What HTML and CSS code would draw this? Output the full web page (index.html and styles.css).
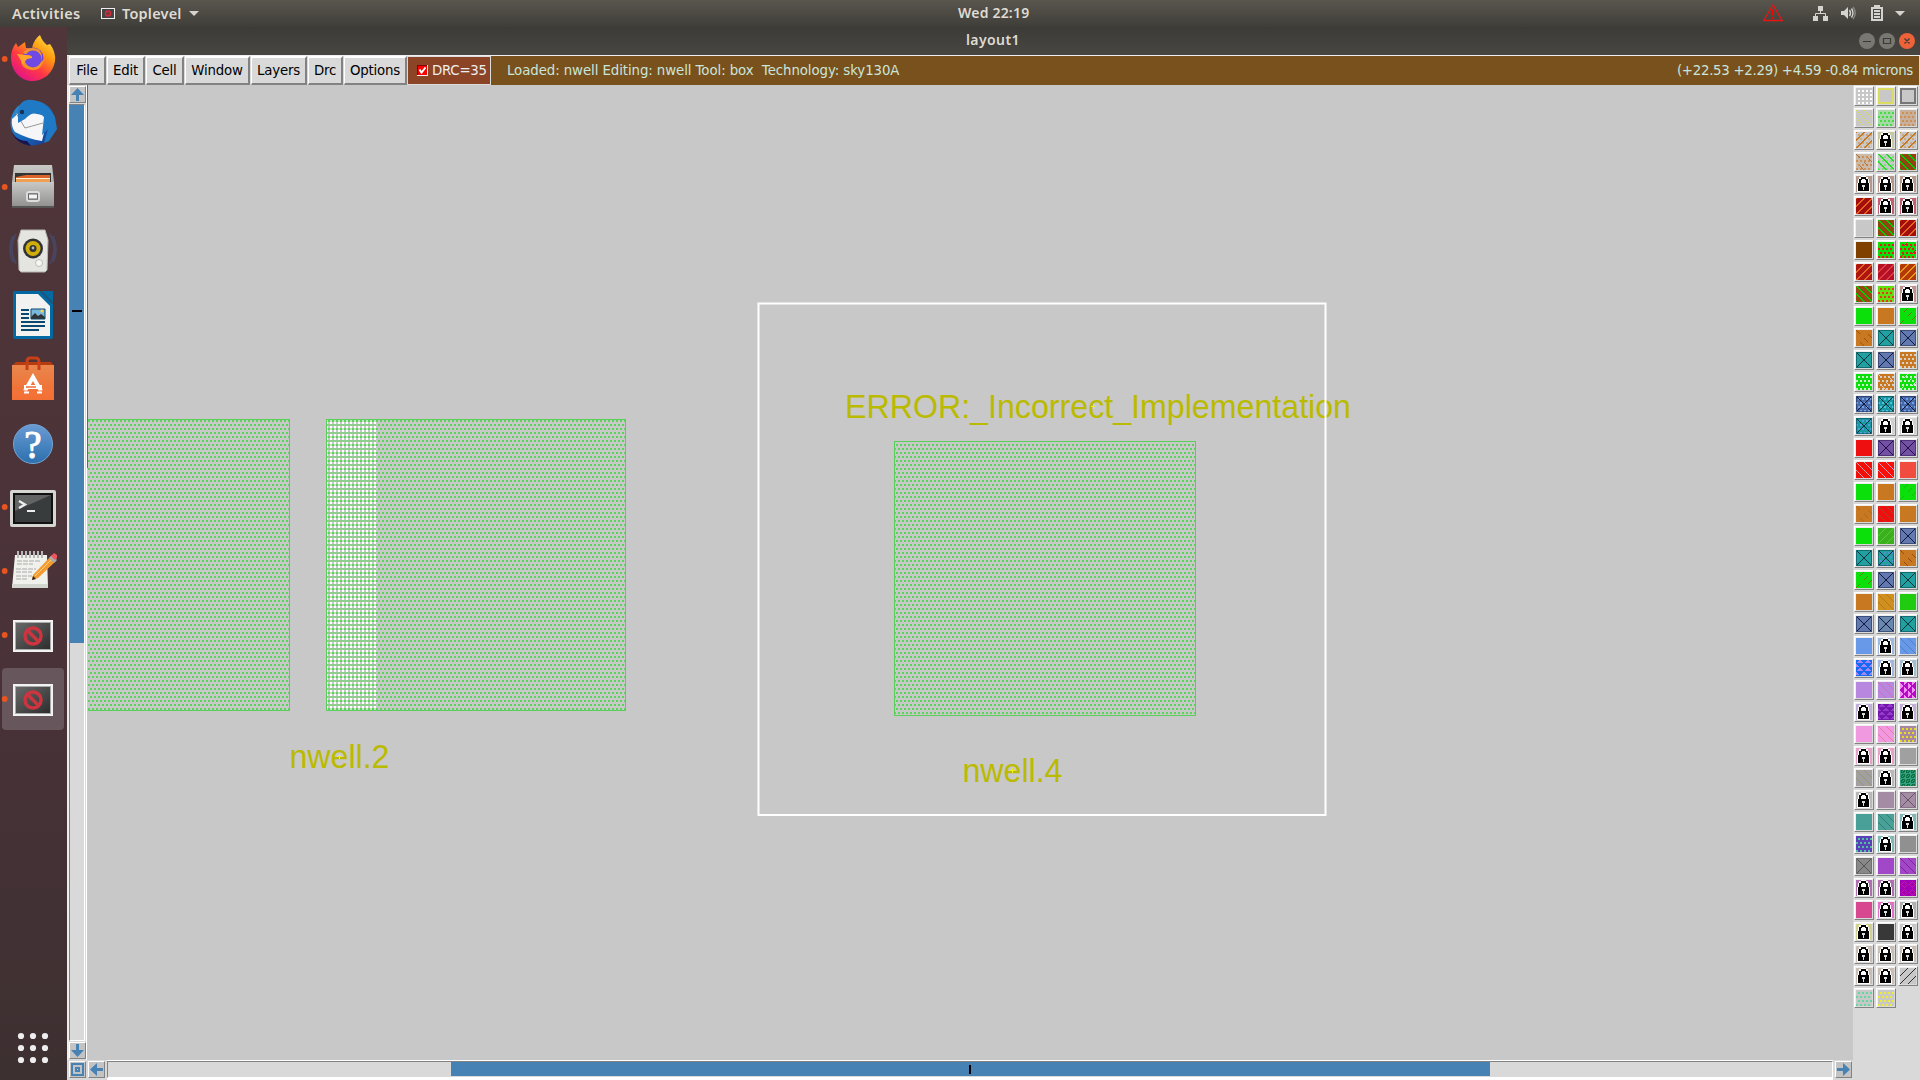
FILE: index.html
```html
<!DOCTYPE html>
<html lang="en">
<head>
<meta charset="utf-8">
<title>layout1</title>
<link rel="stylesheet" href="styles.css">
</head>
<body>
<header class="topbar">
  <span class="activities">Activities</span>
  <svg class="appicon" width="14" height="11" viewBox="0 0 14 11"><rect x=".5" y=".5" width="13" height="10" fill="#444" stroke="#eee"/><circle cx="7" cy="5.5" r="2.5" fill="none" stroke="#d22a36" stroke-width="1.5"/><path d="M5.500 4l3 3" stroke="#d22a36"/></svg>
  <span class="appname">Toplevel</span>
  <svg class="caret" width="10" height="5"><path d="M0 0h10l-5 5z" fill="#d5d3cf"/></svg>
  <span class="clock">Wed 22:19</span>
  <svg class="tray" width="160" height="27" viewBox="1760 0 160 27">
    <path d="M1773 5l9.200 15.500h-18.500z" fill="none" stroke="#e81515" stroke-width="1.300"/><path d="M1773 9.500v6M1773 17v2" stroke="#f00" stroke-width="2"/>
    <g fill="#d5d3cf"><path d="M1818 6h5v5h-5zM1813 16h5v5h-5zM1823 16h5v5h-5z"/><path d="M1820.500 11v2.500M1815.500 16v-2.500h10v2.500" fill="none" stroke="#d5d3cf"/>
    <path d="M1841 11h3l4-4v12l-4-4h-3z"/><path d="M1849.500 10q2 3 0 6M1851.500 8.500q3 4.500 0 9" fill="none" stroke="#d5d3cf" stroke-width="1.400"/><path d="M1853 7q4.500 6 0 12" fill="none" stroke="#858480" stroke-width="1.400"/>
    <path d="M1874 5h6v2h3v14h-12V7h3z"/><path d="M1873 9h8v10h-8z" fill="#4c4a44"/><path d="M1874 10h6v2h-6zM1874 13h6v2h-6zM1874 16h6v2h-6z"/><path d="M1895 11h10l-5 5z"/></g>
  </svg>
</header>
<div class="desktop">
<nav class="dock">
<svg width="67" height="1053" viewBox="0 27 67 1053">
  <defs>
    <linearGradient id="fx" x1="1" y1="0" x2=".3" y2="1"><stop offset="0" stop-color="#fff44f"/><stop offset=".4" stop-color="#ff980e"/><stop offset=".7" stop-color="#ff3647"/><stop offset="1" stop-color="#e31587"/></linearGradient>
    <linearGradient id="tb" x1="0" y1="0" x2="1" y2="1"><stop offset="0" stop-color="#2f94d8"/><stop offset=".6" stop-color="#1764b8"/><stop offset="1" stop-color="#1b2b80"/></linearGradient>
    <linearGradient id="gray" x2="0" y2="1"><stop offset="0" stop-color="#c8c8c6"/><stop offset="1" stop-color="#929290"/></linearGradient>
    <linearGradient id="bag" x2="0" y2="1"><stop offset="0" stop-color="#e9874e"/><stop offset="1" stop-color="#f26a2c"/></linearGradient>
    <linearGradient id="help" x2="0" y2="1"><stop offset="0" stop-color="#6a9bd4"/><stop offset="1" stop-color="#2b70ad"/></linearGradient>
    <linearGradient id="scr" x2="1" y2="1"><stop offset="0" stop-color="#686868"/><stop offset="1" stop-color="#2e2e2e"/></linearGradient>
    <g id="noapp"><rect x="13" y="-16" width="40" height="32" fill="#f2f2f2"/><rect x="15" y="-14" width="36" height="28" fill="#aaa"/><rect x="16" y="-13" width="34" height="26" fill="url(#scr)"/><g fill="none" stroke="#cc3540" stroke-width="3.500"><circle cx="33" cy="0" r="8"/><path d="M27.500-5.500l11 11"/></g></g>
  </defs>
  <rect x="2" y="668" width="62" height="62" rx="4" fill="#67565b"/>
  <g fill="#e95420"><circle cx="4.700" cy="59" r="2.900"/><circle cx="4.700" cy="187" r="2.900"/><circle cx="4.700" cy="507" r="2.900"/><circle cx="4.700" cy="571" r="2.900"/><circle cx="4.700" cy="635" r="2.900"/><circle cx="4.700" cy="699" r="2.900"/></g>
  <path d="M11 58q0-9 5-15l2 4 7-5 1 6 6 0Q34 39 40 35q2 6 7 10l3-1q6 8 5 17c-2 13-12 20-23 20S11 71 11 58z" fill="url(#fx)"/>
  <circle cx="33" cy="58" r="10.500" fill="#6d43dc"/><path d="M23 53q5-7 15-4 6 4 3 13 6-4 5-12-2 22-15 20-10-2-10-9 5 2 9-1l3-4q-5 0-10-3z" fill="#ff9b1b" opacity=".9"/><circle cx="33" cy="59" r="8.500" fill="#7049e3"/><path d="M17 54l9 1q7 0 6 3l-5 1-4 5z" fill="#ffa52a"/>
  <circle cx="33" cy="123" r="22.500" fill="url(#tb)"/><path d="M12 119l9-8 27 5-6 25q-14-2-27-9-4-5-3-13z" fill="#f6f6f8"/><path d="M16 113l9 15 18-5" fill="none" stroke="#999"/><path d="M18 110q3-12 14-10 15 2 23 17l2 12-8 12-5 2 4-14-6 6 2-18q-9-9-19 2l-7 4z" fill="#2079c4"/><path d="M12 133q6 8 15 8l4 5q-14-2-19-13z" fill="#181450"/><circle cx="22" cy="112" r="2.200" fill="#183250"/>
  <path d="M14 165h38l2 17v26H12v-26z" fill="url(#gray)"/><path d="M15 173h36v12H15z" fill="#333"/><path d="M16 177l10-2h24v6H16z" fill="#dc6428"/><path d="M16 179h34v5H16z" fill="#f0a050"/><path d="M16 178.500h34" stroke="#fff1d5"/><path d="M12 182h42v24H12z" fill="url(#gray)"/><rect x="27" y="192" width="12" height="9" rx="2" fill="#999" stroke="#ddd" stroke-width="2"/><rect x="28.500" y="194" width="9" height="5" fill="#f4f4f4" stroke="#666"/><path d="M12 207h42" stroke="#555" stroke-width="2"/>
  <path d="M16 234q-8 15 0 30M13 236q-6 13 0 26M50 234q8 15 0 30M53 236q6 13 0 26" fill="none" stroke="#484560" stroke-width="1.800"/><path d="M21 230h24l3 10-1 30-2 2H21l-2-2-1-30z" fill="#e4e4e0" stroke="#b5b5b0"/><circle cx="33" cy="248.500" r="10" fill="#303233"/><circle cx="33" cy="248.500" r="7.500" fill="#cfae0b"/><circle cx="33" cy="248.500" r="3.500" fill="#333"/><circle cx="33" cy="248" r="1.400" fill="#bbb"/><circle cx="39" cy="263" r="3.500" fill="#f6f6f2" stroke="#bbb"/>
  <path d="M13 293q0-2 2-2h25l13 13v33q0 2-2 2H15q-2 0-2-2z" fill="#0369a3"/><path d="M16 294h22l12 12v30H16z" fill="#f2f2f0"/><path d="M41 291h12v12z" fill="#0369a3"/><path d="M21 310h8M21 314h8M21 318h8M21 322h24M21 326h24M21 330h18" stroke="#0b4a70" stroke-width="2"/><path d="M31 309h14v10H31z" fill="#79b8dd"/><path d="M31 319v-2l4-4 3 3 3-2 4 3v2z" fill="#333"/><path d="M31 309h14v10H31z" fill="none" stroke="#0b4a70"/><circle cx="42" cy="311" r="1.600" fill="#f6d54a"/>
  <path d="M12 366l4-4h35l3 4z" fill="#b63c10"/><path d="M12 365h42v35H12z" fill="url(#bag)"/><path d="M27 370v-8q0-4 3-4h6q3 0 3 4v8" fill="none" stroke="#c54016" stroke-width="3"/><path d="M25 391l8-14 8 14" fill="none" stroke="#fff" stroke-width="4"/><path d="M24 387h18" stroke="#fff" stroke-width="4"/><path d="M26 387h10" stroke="#ec6b30" stroke-width="1.500"/><path d="M12 390h42v10H12z" fill="#f6763e" opacity=".5"/><path d="M24 392.500h5M37 392.500h5" stroke="#fff" stroke-width="2"/>
  <circle cx="33" cy="444" r="19.500" fill="url(#help)" stroke="#76a5d6"/><text x="33" y="458" text-anchor="middle" class="q">?</text>
  <rect x="10" y="490" width="46" height="37" rx="2" fill="#d5d5d2"/><rect x="13" y="493" width="40" height="31" fill="#111"/><path d="M15 495h36v27H15z" fill="#393c3c"/><path d="M15 495h36L15 511z" fill="#626464"/><path d="M19 501l6 3.500-6 3.500M27 511h8" fill="none" stroke="#eee" stroke-width="2.200"/>
  <path d="M15 555h32l1 33H12z" fill="#f0f0ed"/><path d="M12 584h36v4H12z" fill="#d4d7cf"/><path d="M18 551v7M22 551v7M26 551v7M30 551v7M34 551v7M38 551v7M42 551v7" stroke="#b9b9b9" stroke-width="2"/><path d="M17 561h23M17 564h16M16 569h20M16 572h16M16 576h16M16 579h12" stroke="#aaa" stroke-dasharray="5 1"/><path d="M33 575l18-19 5 5-18 17-6 2z" fill="#f39b2d"/><path d="M35 576l18-18" stroke="#ffd18a"/><path d="M49 558l3-3 5 5-3 3z" fill="#aaa"/><path d="M51 556l3-3 3 2v3l-2 2z" fill="#ef535c"/><path d="M32 580l1-4 3 3z" fill="#222"/>
  <use href="#noapp" y="636"/><use href="#noapp" y="700"/>
  <g fill="#eee"><circle cx="21" cy="1036" r="3.100"/><circle cx="33" cy="1036" r="3.100"/><circle cx="45" cy="1036" r="3.100"/><circle cx="21" cy="1048" r="3.100"/><circle cx="33" cy="1048" r="3.100"/><circle cx="45" cy="1048" r="3.100"/><circle cx="21" cy="1060" r="3.100"/><circle cx="33" cy="1060" r="3.100"/><circle cx="45" cy="1060" r="3.100"/></g>
</svg>
</nav>
<main class="window">
  <div class="titlebar"><span class="title">layout1</span>
    <svg class="winbtns" width="60" height="28" viewBox="1857 27 60 28"><circle cx="1867" cy="41" r="8" fill="#787771"/><circle cx="1887" cy="41" r="8" fill="#787771"/><circle cx="1907" cy="41" r="8" fill="#ed6238"/><path d="M1863 41.500h8M1883.500 38.500h7v5h-7zM1904.500 38.500l5 5M1909.500 38.500l-5 5" fill="none" stroke="#3b3a35" stroke-width="1.200"/></svg>
  </div>
  <div class="menubar">
    <button class="menu file">File</button><button class="menu edit">Edit</button><button class="menu cell">Cell</button><button class="menu win">Window</button><button class="menu layers">Layers</button><button class="menu drcm">Drc</button><button class="menu opts">Options</button>
    <div class="drc"><svg width="11" height="11" viewBox="0 0 11 11"><path d="M0 0h11v11H0z" fill="#eee"/><path d="M0 0h10v10H0z" fill="#800"/><path d="M1 1h9v9H1z" fill="#f00"/><path d="M2.500 4.500l2 3 4-5" stroke="#fff" stroke-width="2" fill="none"/></svg><span>DRC=35</span></div>
    <div class="status"><span class="msg">Loaded: nwell Editing: nwell Tool: box&nbsp; Technology: sky130A</span><span class="coords">(+22.53 +2.29) +4.59 -0.84 microns</span></div>
  </div>
  <div class="work">
    <div class="left">
      <div class="row">
        <div class="vscroll">
          <div class="arrow"><svg width="13" height="13"><path d="M6.500 0L13 7H8v6H5V7H0z" fill="#4682b4"/></svg></div>
          <div class="vtrough"><div class="vthumb"><i></i></div></div>
          <div class="arrow"><svg width="13" height="13"><path d="M6.500 13L13 6H8V0H5v6H0z" fill="#4682b4"/></svg></div>
        </div>
        <svg class="canvas" width="1766" height="975" viewBox="87 85 1766 975">
          <defs>
            <pattern id="nw" x="0" y="420" width="4" height="8" patternUnits="userSpaceOnUse"><path d="M0 0h2v2H0zM2 4h2v2H2z" fill="#59d659"/></pattern>
            <pattern id="err" x="0" y="420" width="4" height="8" patternUnits="userSpaceOnUse"><path d="M2 0h2v8H2z" fill="#fff"/><path d="M2 0h2v2H2z" fill="#c6e2c3"/><path d="M0 0h2v2H0z" fill="#59d659"/><path d="M0 4h4v2H0z" fill="#8fce8c"/></pattern>
          </defs>
          <g class="crisp">
            <rect x="88" y="419" width="202" height="292" fill="url(#nw)"/><path d="M88 419.500h201.500v291H88" class="edge"/><path d="M87.500 85v383" stroke="#666"/>
            <rect x="376" y="419" width="250" height="292" fill="url(#nw)"/><rect x="326" y="419" width="50" height="291" fill="url(#err)"/><rect x="326.500" y="419.500" width="299" height="291" class="edge"/>
            <rect x="894" y="441" width="301" height="275" fill="url(#nw)"/><rect x="894.500" y="441.500" width="301" height="274" class="edge"/>
          </g>
          <g class="label"><text x="845" y="417.500" textLength="506" lengthAdjust="spacingAndGlyphs">ERROR:_Incorrect_Implementation</text><text x="289.500" y="767.500" textLength="100" lengthAdjust="spacingAndGlyphs">nwell.2</text><text x="962.500" y="781.500" textLength="100" lengthAdjust="spacingAndGlyphs">nwell.4</text></g>
          <g class="crisp"><path d="M337 756.500h5M339.500 754v5M1091 406.500h5M1093.500 404v5M1010 770.500h5M1012.500 768v5" stroke="#f0f020"/><rect x="758.500" y="303.500" width="567" height="511.500" fill="none" stroke="#fff" stroke-width="2" shape-rendering="auto"/></g>
        </svg>
      </div>
      <div class="hscroll">
        <div class="arrow"><svg width="13" height="13"><path d="M1 1h11v11H1z" fill="none" stroke="#4682b4" stroke-width="2"/><path d="M4 4h5v5H4z" fill="#4682b4"/><path d="M6 6h1v1H6z" fill="#ccc"/></svg></div>
        <div class="arrow"><svg width="13" height="13"><path d="M0 6.500L7 0v5h6v3H7v5z" fill="#4682b4"/></svg></div>
        <div class="htrough"><div class="hthumb"><i></i></div></div>
        <div class="arrow"><svg width="13" height="13"><path d="M13 6.500L6 0v5H0v3h6v5z" fill="#4682b4"/></svg></div>
      </div>
    </div>
    <div class="palette" id="palette"></div>
  </div>
</main>
</div>
<script src="palette.js"></script>
</body>
</html>
```
FILE: styles.css
```css
* { box-sizing: border-box; }
body { margin: 0; width: 1920px; height: 1080px; overflow: hidden; background: #d9d9d9; font-family: "DejaVu Sans", sans-serif; font-size: 13.33px; }
svg { display: block; flex: none; }
.topbar { position: relative; height: 27px; display: flex; align-items: center; background: linear-gradient(#59564e, #403e39); color: #dfdbd2; font: 600 14.500px "Noto Sans", sans-serif; padding-left: 12px; white-space: nowrap; }
.topbar span { padding-bottom: 2px; }
.activities { width: 89px; letter-spacing: .4px; }
.appname { margin-left: 7px; width: 62px; letter-spacing: .2px; }
.caret { margin-left: 5px; }
.clock { position: absolute; left: 958px; font-size: 14px; letter-spacing: .2px; }
.tray { margin-left: auto; }
.desktop { display: flex; height: 1053px; }
.dock { width: 67px; flex: none; background: linear-gradient(#50363a, #493238 60%, #3d3031); }
.q { font: 39px "Liberation Serif", serif; fill: #fff; stroke: #fff; }
.window { flex: 1; min-width: 0; display: flex; flex-direction: column; background: #d9d9d9; }
.titlebar { position: relative; height: 28px; flex: none; background: linear-gradient(#3c3b37, #474641); color: #dfdbd2; font: 600 14px/28px "Noto Sans", sans-serif; display: flex; justify-content: flex-end; padding-right: 3px; }
.title { position: absolute; left: 899px; top: -1px; letter-spacing: .4px; }
.menubar { height: 30px; flex: none; border-top: 1px solid #eee; padding-left: 2px; display: flex; }
.menu { font: 13.33px "DejaVu Sans", sans-serif; letter-spacing: -.2px; margin: 0 1px 0 0; padding: 0 0 1px; background: #d9d9d9; color: #000; border: 2px solid; border-color: #fff #828282 #828282 #fff; border-width: 2px 2px 2px 1px; height: 29px; }
.file { width: 37px; } .edit { width: 38px; } .cell { width: 38px; } .win { width: 65px; } .layers { width: 56px; } .drcm { width: 35px; } .opts { width: 63px; }
.drc { width: 83px; height: 29px; border: 1px solid #ddd; border-left: 0; background: #8b4426; color: #eee; display: flex; align-items: center; padding: 0 0 1px 9px; gap: 4px; }
.drc span { letter-spacing: -.25px; }
.status { flex: 1; margin-right: 1px; background: #79511d; color: #c9e5dc; display: flex; align-items: center; justify-content: space-between; padding: 0 6px 1px 16px; }
.msg { letter-spacing: -.08px; }
.coords { letter-spacing: -.28px; }
.work { height: 995px; display: flex; }
.left { width: 1786px; display: flex; flex-direction: column; }
.row { display: flex; height: 975px; }
.vscroll { width: 20px; display: flex; flex-direction: column; align-items: center; padding-top: 1px; border-right: 1px solid #fff; border-left: 2px solid #eee; }
.arrow { width: 17px; height: 17px; flex: none; padding: 1px; background: #c3c3c3; border: 1px solid; border-color: #fff #828282 #828282 #fff; }
.vtrough { width: 16px; height: 937px; margin: 1px 1px 1px 0; border: 1px solid; border-color: #828282 #fff #fff #828282; }
.vthumb { height: 538px; background: #4682b4; padding: 205px 2px 0; }
.vthumb i { display: block; height: 2px; background: #000; }
.canvas { background: #c8c8c8; }
.edge { fill: none; stroke: #59cf59; }
.crisp { shape-rendering: crispEdges; }
.label { font: 33px "Liberation Sans", sans-serif; fill: #baba00; }
.hscroll { height: 20px; padding: 1px 1px 0 2px; display: flex; gap: 2px; }
.htrough { flex: 1; height: 17px; border-top: 1px solid #828282; border-left: 1px solid #828282; border-right: 1px solid #fff; border-bottom: 1px solid #fff; padding-left: 343px; box-shadow: 0 -1px #fff, 0 2px #fff; }
.hthumb { width: 1039px; height: 14px; background: #4682b4; padding: 3px 0 0 518px; }
.hthumb i { display: block; width: 2px; height: 9px; background: #000; }
.palette { display: grid; grid-template-columns: repeat(3, 20px); grid-auto-rows: 20px; gap: 2px; padding: 1px 0 0 1px; align-content: start; }
.swatch { border: 1px solid; border-color: #fff #828282 #828282 #fff; padding: 1px; background: #d9d9d9; box-shadow: inset 1px 1px #eee; }
```
FILE: palette.js
```js
// One string per palette row; a cell is "kind:background:foreground:dots".
const G = '#c8c8c8', OR = '#c87820', GR = '#0be00b';
const TX = 'x:#20a0a0:#063038', BX = 'x:#6278b0:#101a38', PX = 'x:#7450a4:#201040';
const L = c => 'l:' + c + ':';
const rows = [
  [`d:${G}:#fff`, `o:${G}:#dcdc60`, `o:${G}:#77777a`],
  [`h:${G}:#dcdc60`, `d:#a8d8a8:#43dc43`, `d:#c8b09c:#cc9054`],
  [`uq:${G}:${OR}`, L('#c8c8a0'), `uq:${G}:${OR}`],
  [`wq:#ccbaa8:#b07040:#cc9054`, `Hq:${G}:#20e020:#80dc80`, `H:#904410:#00d000`],
  [L('#b4988c'), L('#b4988c'), L('#b4988c')],
  [`u:#a50c0c:#dd6a20`, L('#c06070'), L('#c06070')],
  [`s:${G}:`, `H:#904410:#00d000`, `u:#a50c0c:#dd6a20`],
  ['s:#804000:', `d:${GR}:#e81818`, `dv:${GR}:#e81818`],
  ['u:#b01410:#dd6a20', 'u:#b41028:#e04040', 'u:#b43808:#e89818'],
  ['H:#984810:#00d000', 'd:#60e010:#e83818', L('#c09090')],
  [`s:${GR}:`, `s:${OR}:`, `v:${GR}:#607808`],
  [`w:${OR}:#a05008`, TX, BX],
  [TX, BX, `d:${OR}:#d8d0c8`],
  [`d:${GR}:#d0e8d0`, `dw:${OR}:#d8d0c8`, `dv:${GR}:#d0e8d0`],
  ['xq:#4868a8:#101a38:#70a0e8', 'xq:#1898a0:#063038:#50c0e0', 'xq:#4868a8:#101a38:#70a0e8'],
  ['xq:#1898a0:#063038:#50a0e0', L('#d0d0d0'), L('#d0d0d0')],
  ['s:#ee1010:', PX, PX],
  ['h:#f01008:#d8a0b0', 'h:#f81008:#d8a0c8', 's:#f04c40:'],
  [`s:${GR}:`, `s:${OR}:`, `v:${GR}:#20b810`],
  [`w:${OR}:#a86820`, 'h:#ec1010:#b84018', `s:${OR}:`],
  [`s:${GR}:`, 'n:#38b020:#60c828', BX],
  [TX, 'xq:#20a0a0:#063038:#5090d0', `w:${OR}:#904c10`],
  [`v:${GR}:#607808`, BX, TX],
  [`s:${OR}:`, 'h:#d09020:#b87818', 's:#20cc10:'],
  [BX, 'x:#6888b0:#101a38', TX],
  ['s:#6898e8:', L('#a0b8e0'), 'h:#6898e8:#5080c8'],
  ['t:#1868f8:#a088f0', L('#a0b8e0'), L('#a0c0d0')],
  ['s:#b888e0:', 'h:#b888e0:#d070b0', 'T:#b808c8:#f090f0'],
  [L('#c0b0d8'), 't:#7018a8:#9838d0', L('#c0b0d8')],
  ['s:#f098e0:', 'h:#f098e0:#e878a0', 'd:#a888a0:#e8dc20'],
  [L('#e8a0c8'), L('#e8a0c8'), 's:#a0a0a0:'],
  ['h:#a0a0a0:#a09070', L('#b8b8b8'), 'z:#107040:#30a080'],
  [L('#b8b8b8'), 's:#a48ca4:', 'x:#a48ca4:#685468'],
  ['s:#48a098:', 'h:#48a098:#308070', L('#80b8b8')],
  ['d:#5840b8:#50c0a0', L('#80b8b8'), 's:#909090:'],
  ['x:#888888:#555555', 's:#a048c8:', 'h:#a048c8:#882098'],
  [L('#b070b0'), L('#b070b0'), 'r:#a000b8:#c81898'],
  ['s:#d84890:', L('#e070c8'), L('#b0b0b0')],
  [L('#d0d090'), 's:#383838:', L(G)],
  [L('#c8beb4'), L('#c8beb4'), L('#c8beb4')],
  [L('#c8beb4'), L('#c8beb4'), `n:${G}:#303030`],
  [`d:${G}:#60d8a0`, `d:${G}:#ecec30`]
];

function marks(kind, fg, extra) {
  let out = '';
  const px = (x, y, w, h, c) => { out += `<rect x="${x}" y="${y}" width="${w}" height="${h}" fill="${c || fg}"/>`; };
  // Stipple of 2px squares; alternate rows are staggered except in white.
  if (/[dq]/.test(kind)) {
    for (let y = 0; y < 4; y++)
      for (let x = 0; x < 4; x++)
        px(x * 4 + (y % 2 && fg !== '#fff' ? 0 : 2), y * 4 + 2, 2, 2, kind.includes('q') && !extra ? '#cca880' : extra);
  }
  // Diagonals repeat every 8px and are stepped pixel by pixel.
  for (let y = 0; y < 16; y++)
    for (let x = 0; x < 16; x++) {
      const fall = (x - y + 16) % 8, rise = (x + y + 1) % 8;
      if (/h/.test(kind) && fall === 0) px(x, y, 1, 1);
      if (/H/.test(kind) && fall < 2) px(x, y, 1, 1);
      if (/w/.test(kind) && fall === 0 && (x + y) % 16 < 8) px(x, y, 1, 1);
      if (/n/.test(kind) && rise === 0) px(x, y, 1, 1);
      if (/u/.test(kind) && rise < 2) px(x, y, 1, 1);
      if (/v/.test(kind) && rise === 0 && (x - y + 16) % 16 < 8) px(x, y, 1, 1);
      if (kind === 'z' && (x * 7 + y * 5 + x * y) % 5 < 2) px(x, y, 1, 1);
      if (kind === 'r' && Math.abs(x % 8 - 4) + Math.abs(y % 8 - 4) === 3) px(x, y, 1, 1);
    }
  if (kind.includes('x')) out += `<path d="M1 1l14 14M15 1l-14 14" stroke="${fg}"/><path d="M.5.5h15v15H.500z" fill="none" stroke="${fg}" opacity=".45"/>`;
  if (kind === 'o') out += `<path d="M1 1h14v14H1z" fill="none" stroke="${fg}" stroke-width="2"/>`;
  if (kind === 't') for (let y = 0; y < 4; y++) for (let x = 0; x < 3; x++)
    out += `<path d="M${x * 8 - (y % 2) * 4} ${y * 4 + 3}l4-3 4 3z" fill="${fg}"/>`;
  if (kind === 'T') for (let y = 0; y < 3; y++) for (let x = 0; x < 4; x++)
    out += `<path d="M${x * 4} ${y * 8 - (x % 2) * 4}l3 4-3 4z" fill="${fg}"/>`;
  if (kind === 'l') out += '<path d="M5 0h5v1h2v2h1v4h1v9H1V7h1V3h1V1h2z" fill="#fff"/><path d="M3 7V3h2V1h5v2h2v4h1v8H2V7z" fill="#000"/><path d="M5 7V4h1V3h3v1h1v3z" fill="#fff"/><path d="M6 9h3v2H8v3H7v-3H6z" fill="#ddd"/>';
  return out;
}

document.getElementById('palette').innerHTML = rows.flat().map(cell => {
  const [kind, bg, fg, extra] = cell.split(':');
  return `<div class="swatch"><svg class="crisp" width="16" height="16" viewBox="0 0 16 16"><path d="M0 0h16v16H0z" fill="${bg}"/>${marks(kind, fg, extra)}</svg></div>`;
}).join('');
```
